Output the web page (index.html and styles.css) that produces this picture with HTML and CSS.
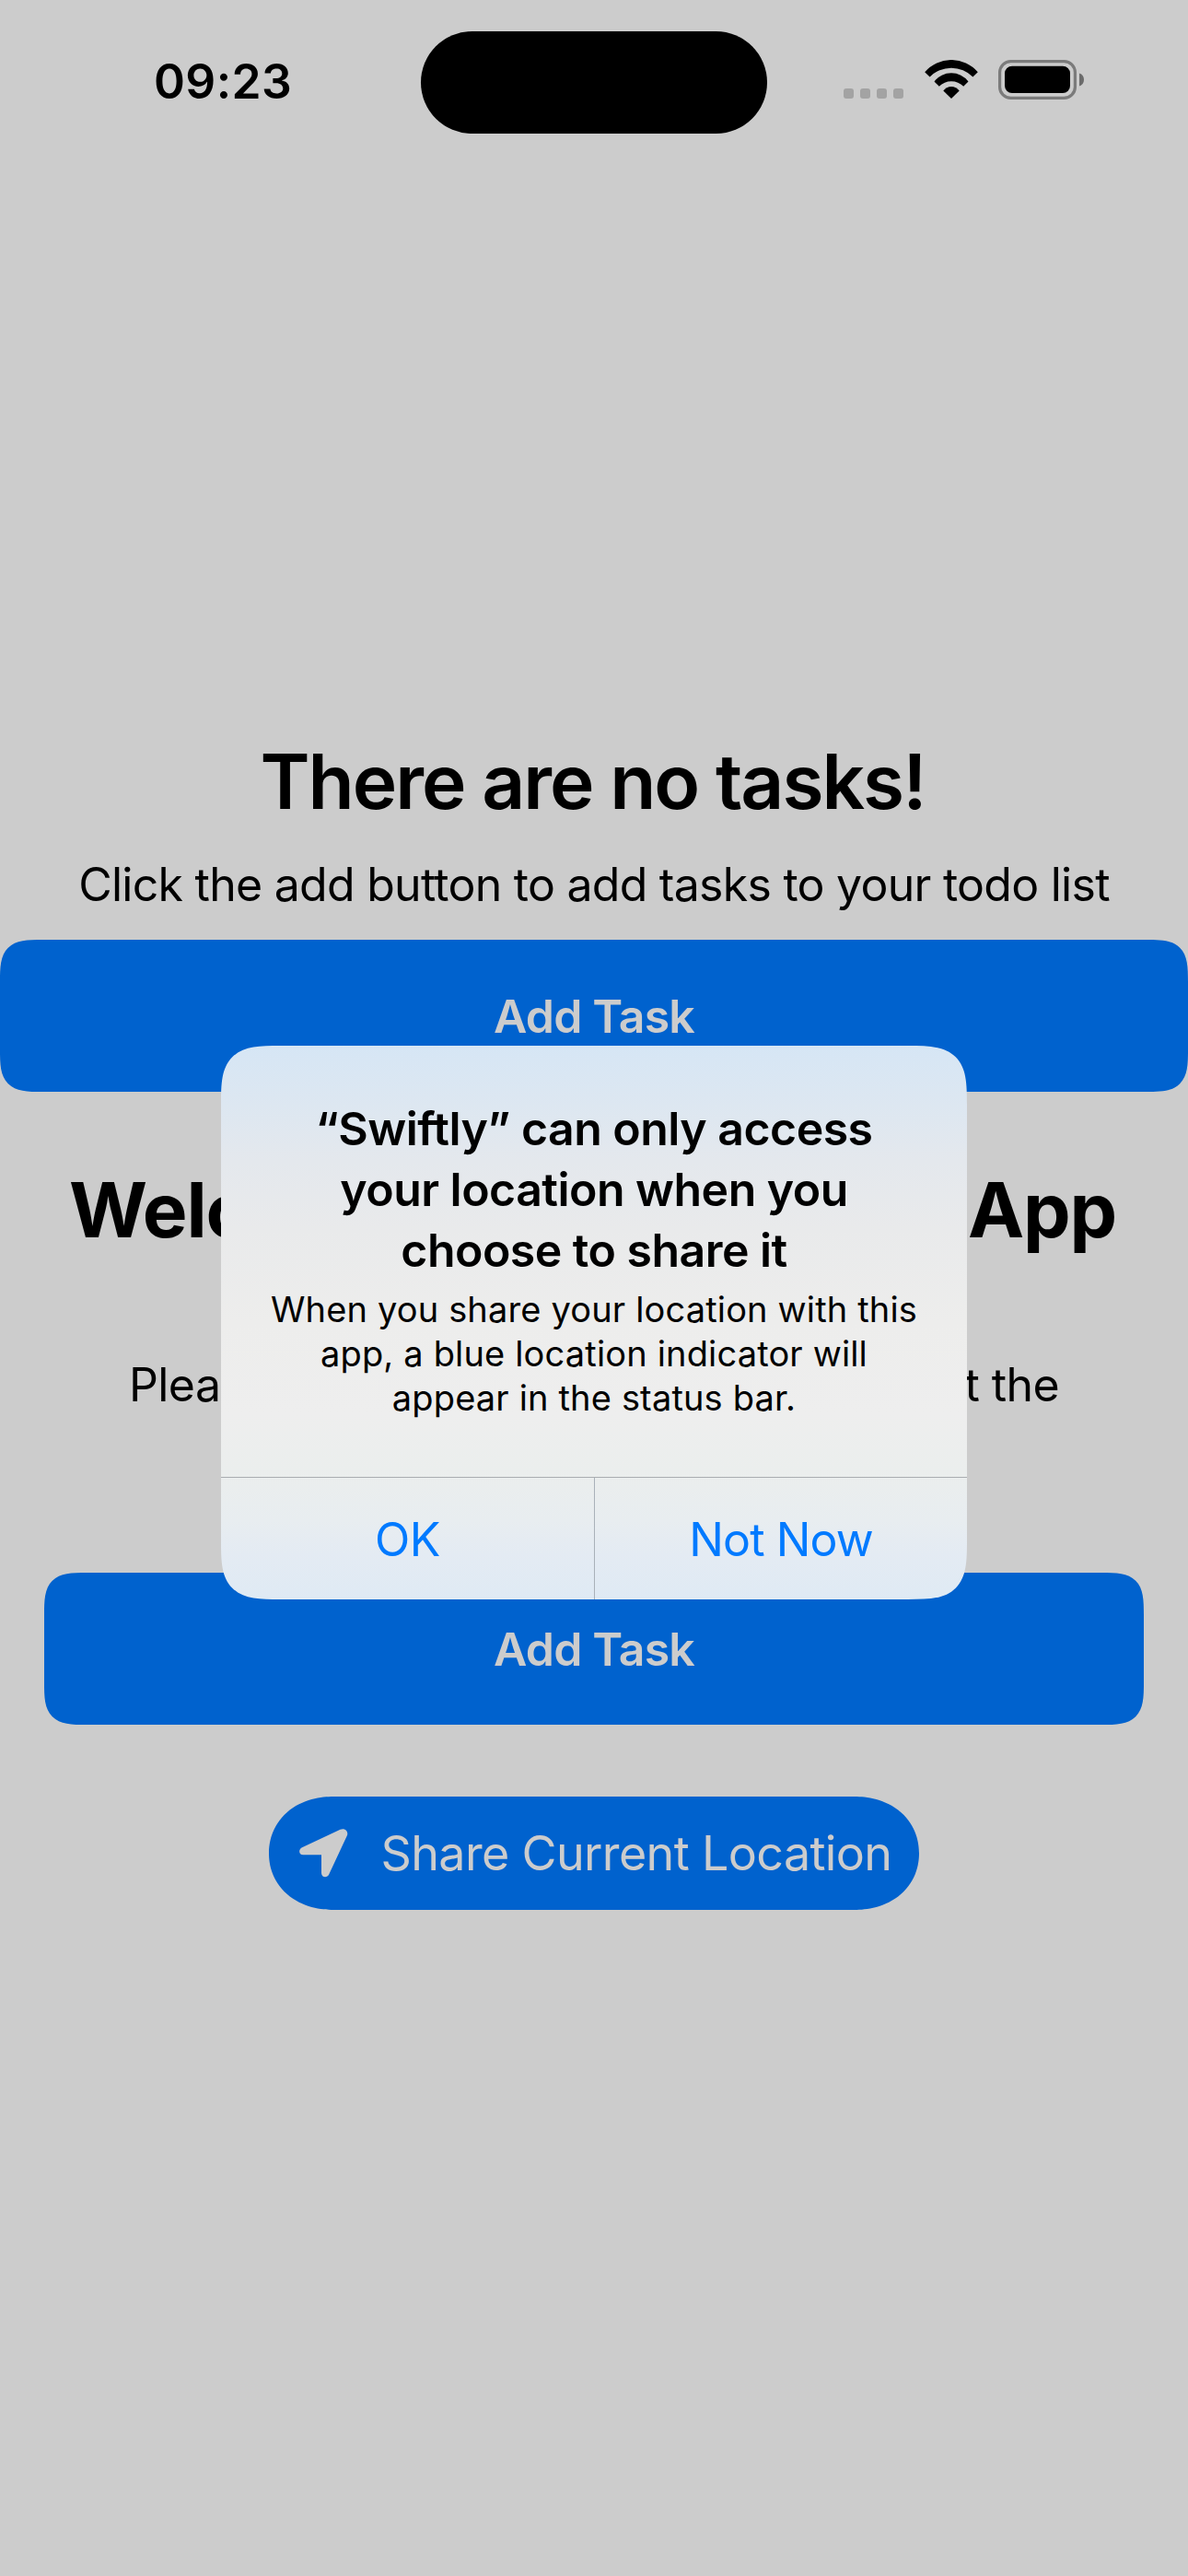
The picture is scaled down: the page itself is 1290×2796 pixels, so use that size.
FILE: index.html
```html
<!DOCTYPE html>
<html lang="en">
<head>
<meta charset="utf-8">
<title>Swiftly</title>
<link rel="stylesheet" href="styles.css">
</head>
<body>
<div class="screen">
  <header class="status-bar">
    <div class="status-time">09:23</div>
    <div class="island"></div>
    <div class="status-icons">
      <div class="dots"><i></i><i></i><i></i><i></i></div>
      <svg class="wifi" viewBox="-29 -42 58 42" width="58" height="42">
        <path d="M-28.8-28.8A38 38 0 0 1 28.8-28.8L23.4-23.5A33 33 0 0 0-23.4-23.5Z"/>
        <path d="M-18.5-18.6A23.3 23.3 0 0 1 18.5-18.6L13.2-13.2A18.3 18.3 0 0 0-13.2-13.2Z"/>
        <path d="M-8.7-8.5A10.6 10.6 0 0 1 8.7-8.5L0 0Z"/>
      </svg>
      <svg class="battery" viewBox="0 0 94 43" width="94" height="43">
        <rect x="1.6" y="1.6" width="81.8" height="39.8" rx="12" fill="none" stroke="#7b7b7b" stroke-width="3.2"/>
        <rect x="7" y="6.7" width="71" height="29.4" rx="8"/>
        <path d="M88 14.5C91 15.5 93 18 93 21.5S91 27.500 88 28.500Z" fill="#6b6b6b"/>
      </svg>
    </div>
  </header>

  <main class="content">
    <h1 class="title title-empty">There are no tasks!</h1>
    <p class="hint">Click the add button to add tasks to your todo list</p>
    <button class="btn btn-full">Add Task</button>
    <h1 class="title title-welcome"><span>Welcome</span><span>App</span></h1>
    <p class="request"><span>Please</span><span>at the</span></p>
    <button class="btn btn-inset">Add Task</button>
    <button class="share">
      <svg viewBox="0 0 53 53" width="53" height="53"><path d="M44.500.8 3 20.200C-1.300 22.300-.6 28.300 4.200 28.300H24V48C24 52.800 30.200 53.800 32.200 49.500L51.800 7.500C53.800 3 49.500-1.600 44.500.8Z"/></svg>
      <span>Share Current Location</span>
    </button>
  </main>

  <section class="alert" role="alertdialog">
    <div class="alert-body">
      <h2 class="alert-title">“Swiftly” can only access<br>your location when you<br>choose to share it</h2>
      <p class="alert-message">When you share your location with this<br>app, a blue location indicator will<br>appear in the status bar.</p>
    </div>
    <div class="alert-actions">
      <button>OK</button>
      <button>Not Now</button>
    </div>
  </section>
</div>
</body>
</html>
```

FILE: styles.css
```css
* { box-sizing: border-box; }

body {
  margin: 0;
  background: #ccc;
  color: #000;
  font-family: Inter, "Liberation Sans", sans-serif;
}

h1, h2, p { margin: 0; white-space: nowrap; }

button {
  border: 0;
  padding: 0;
  background: none;
  font: inherit;
  white-space: nowrap;
}

.screen {
  position: relative;
  width: 1290px;
  height: 2796px;
  overflow: hidden;
  background: #ccc;
}

.status-bar {
  display: grid;
  grid-template-columns: 457px 376px 1fr;
  height: 177px;
}

.status-time {
  padding: 57px 0 0 167px;
  font-size: 51.500px;
  line-height: 62px;
  font-weight: 600;
  letter-spacing: 0.4px;
}

.island {
  height: 111px;
  margin-top: 33.500px;
  border-radius: 56px;
  background: #000;
}

.status-icons {
  display: flex;
  align-items: flex-start;
  padding: 65px 0 0 83px;
}

.dots { display: flex; gap: 7px; margin-top: 31px; }
.dots i { width: 11px; height: 11px; border-radius: 3px; background: #a3a3a3; }
.wifi { margin-left: 22.500px; }
.battery { margin-left: 22.500px; }

.content {
  display: flex;
  flex-direction: column;
  align-items: center;
  padding-top: 622px;
}

.title {
  font-size: 82px;
  line-height: 100px;
  font-weight: 600;
  letter-spacing: -2px;
}

.title-empty { margin-right: 3px; }

.hint {
  margin-top: 30px;
  font-size: 50px;
  line-height: 62px;
  letter-spacing: -0.740px;
}

.btn {
  height: 165px;
  border-radius: 46px;
  corner-shape: superellipse(1.7);
  background: #0062ce;
  color: #ccc;
  font-size: 50px;
  font-weight: 600;
  letter-spacing: -0.850px;
}

.btn-full { width: 1290px; margin-top: 29px; }

.title-welcome {
  display: flex;
  justify-content: space-between;
  width: 1137px;
  margin: 79px 3px 0 0;
  font-weight: 700;
  letter-spacing: -1.200px;
}

.request {
  display: flex;
  justify-content: space-between;
  width: 1010px;
  margin-top: 108px;
  font-size: 50px;
  line-height: 62px;
  letter-spacing: -0.600px;
}

.btn-inset { width: 1194px; margin-top: 173px; }

.share {
  display: flex;
  align-items: center;
  width: 706px;
  height: 123px;
  margin-top: 78px;
  padding-left: 33px;
  gap: 35.500px;
  border-radius: 70px / 61.500px;
  corner-shape: superellipse(1.08);
  background: #0062ce;
  color: #ccc;
  font-size: 52px;
  letter-spacing: -0.640px;
}

.share svg { fill: #ccc; }

.alert {
  position: absolute;
  left: 240px;
  top: 1135px;
  display: flex;
  flex-direction: column;
  width: 810px;
  height: 601px;
  border-radius: 64px;
  corner-shape: superellipse(1.7);
  overflow: hidden;
  text-align: center;
  background: linear-gradient(#d6e6f5 0, #dde7f1 65px, #e4e8ed 125px, #e9eaeb 200px, #ededec 300px, #eee 400px, #ebeeed 460px, #e8edf0 515px, #e4ebf3 550px, #dfeaf4 601px);
}

.alert-body { height: 468px; padding-top: 57px; }

.alert-title {
  font-size: 50px;
  line-height: 66px;
  font-weight: 600;
  letter-spacing: -0.530px;
}

.alert-message {
  margin-top: 7px;
  font-size: 38px;
  line-height: 48px;
  letter-spacing: 0.160px;
}

.alert-actions {
  display: grid;
  grid-template-columns: 406px 1fr;
  flex: 1;
  border-top: 1px solid #a9adb1;
}

.alert-actions button {
  padding-top: 2px;
  color: #007aff;
  font-size: 50px;
  letter-spacing: -0.900px;
}

.alert-actions button:first-child {
  border-right: 1px solid #a9b1b9;
  letter-spacing: -0.3px;
}
```
